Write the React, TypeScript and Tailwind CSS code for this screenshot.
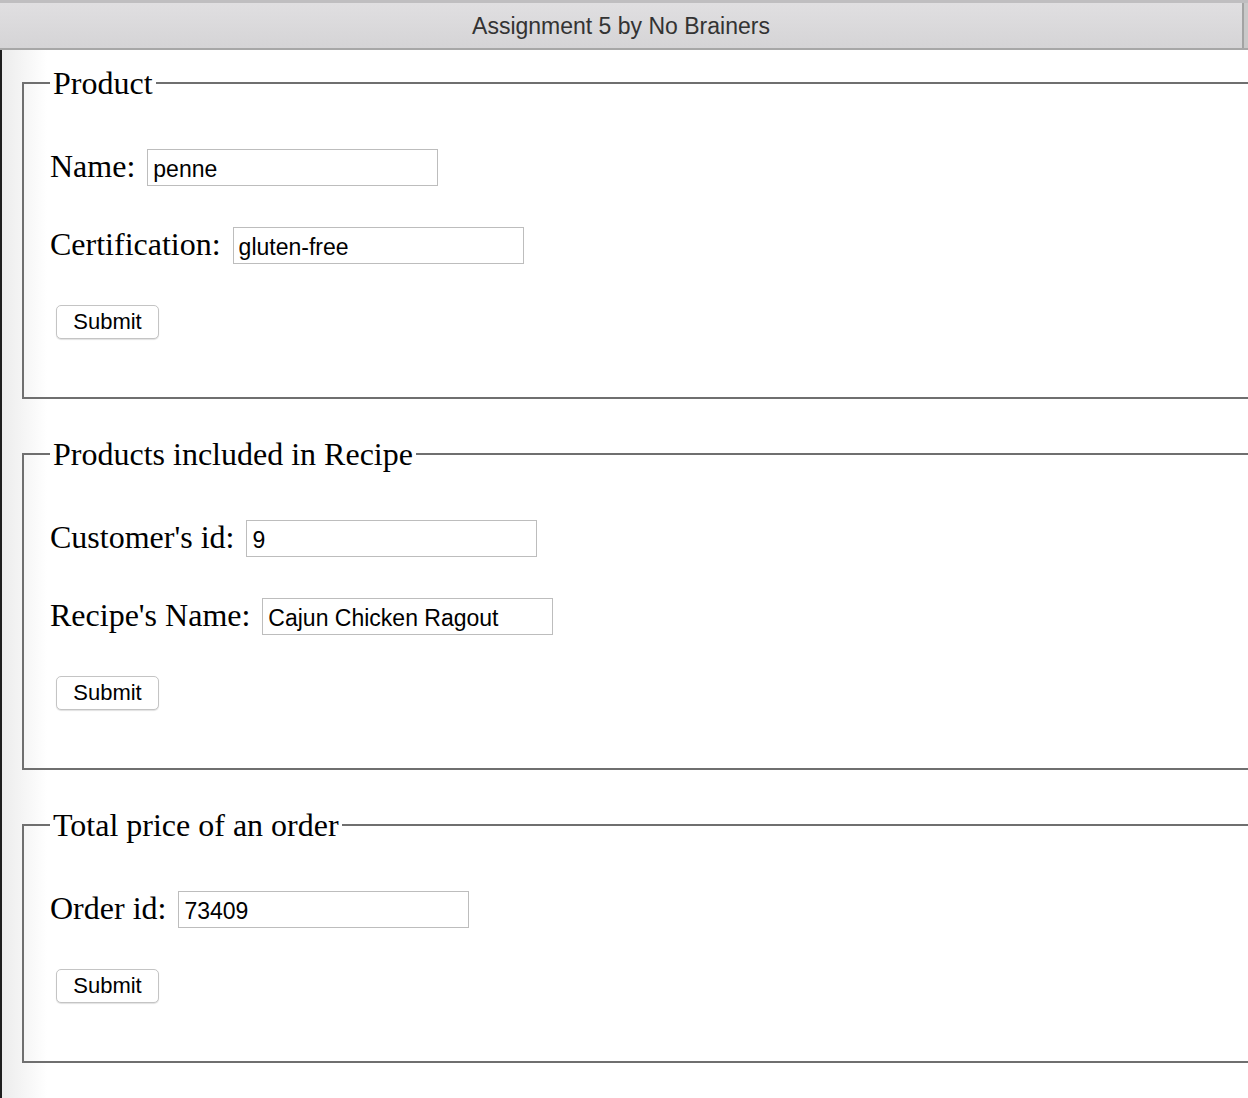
import React from 'react';

type Field = { label: string; value: string };

const sections: { title: string; fields: Field[] }[] = [
  {
    title: 'Product',
    fields: [
      { label: 'Name:', value: 'penne' },
      { label: 'Certification:', value: 'gluten-free' },
    ],
  },
  {
    title: 'Products included in Recipe',
    fields: [
      { label: "Customer's id:", value: '9' },
      { label: "Recipe's Name:", value: 'Cajun Chicken Ragout' },
    ],
  },
  {
    title: 'Total price of an order',
    fields: [{ label: 'Order id:', value: '73409' }],
  },
];

const FormSection: React.FC<{ title: string; fields: Field[]; first?: boolean }> = ({ title, fields, first }) => (
  <fieldset
    className={`border-2 border-r-0 border-[#6f6f6f] ml-[20px] p-0 min-w-0 shrink-0 ${first ? 'mt-[15px]' : 'mt-[37px]'}`}
  >
    <legend className="ml-[26px] px-[3px] text-[32px] leading-[36px] text-black font-['Liberation_Serif',serif]">
      {title}
    </legend>
    <div className="flex flex-col pl-[26px] pt-[47px] pb-[58px]">
      {fields.map((f) => (
        <div key={f.label} className="flex items-baseline gap-[12px] mb-[40px]">
          <label className="text-[32px] leading-[37px] text-black font-['Liberation_Serif',serif] whitespace-nowrap">
            {f.label}
          </label>
          <input
            type="text"
            defaultValue={f.value}
            className="w-[291px] h-[37px] border border-[#bdbdbd] bg-white px-[5px] pt-[4px] text-[23px] text-black font-['Liberation_Sans',Arial,sans-serif] outline-none"
          />
        </div>
      ))}
      {/* submit */}
      <div className="mt-[1px]">
        <button
          type="button"
          className="ml-[6px] w-[103px] h-[34px] rounded-[5px] border border-[#c4c4c4] bg-white shadow-[0_1px_1px_rgba(0,0,0,0.12)] text-[22px] leading-none text-black font-['Liberation_Sans',Arial,sans-serif]"
        >
          Submit
        </button>
      </div>
    </div>
  </fieldset>
);

export default function App() {
  return (
    <div className="w-[1248px] h-[1098px] overflow-hidden bg-white flex flex-col">
      {/* Window title bar */}
      <header className="h-[50px] shrink-0 flex border-t-[3px] border-b-2 border-t-[#bfbec0] border-b-[#a7a7a7] bg-[linear-gradient(to_bottom,#e0dfe1,#d5d4d6)]">
        <div className="flex-1 flex items-center justify-center pt-[2px] border-r-2 border-[#a3a3a3]">
          <span className="text-[23px] leading-none text-[#333333] font-['Liberation_Sans',Arial,sans-serif]">
            Assignment 5 by No Brainers
          </span>
        </div>
        <div className="w-[4px] bg-[#c9c9c9]" />
      </header>

      <main className="flex-1 flex flex-col border-l-2 border-[#1e1e1e] bg-[linear-gradient(to_right,#ececec,#ffffff_45px)]">
        {sections.map((s, i) => (
          <FormSection key={s.title} title={s.title} fields={s.fields} first={i === 0} />
        ))}
      </main>
    </div>
  );
}
